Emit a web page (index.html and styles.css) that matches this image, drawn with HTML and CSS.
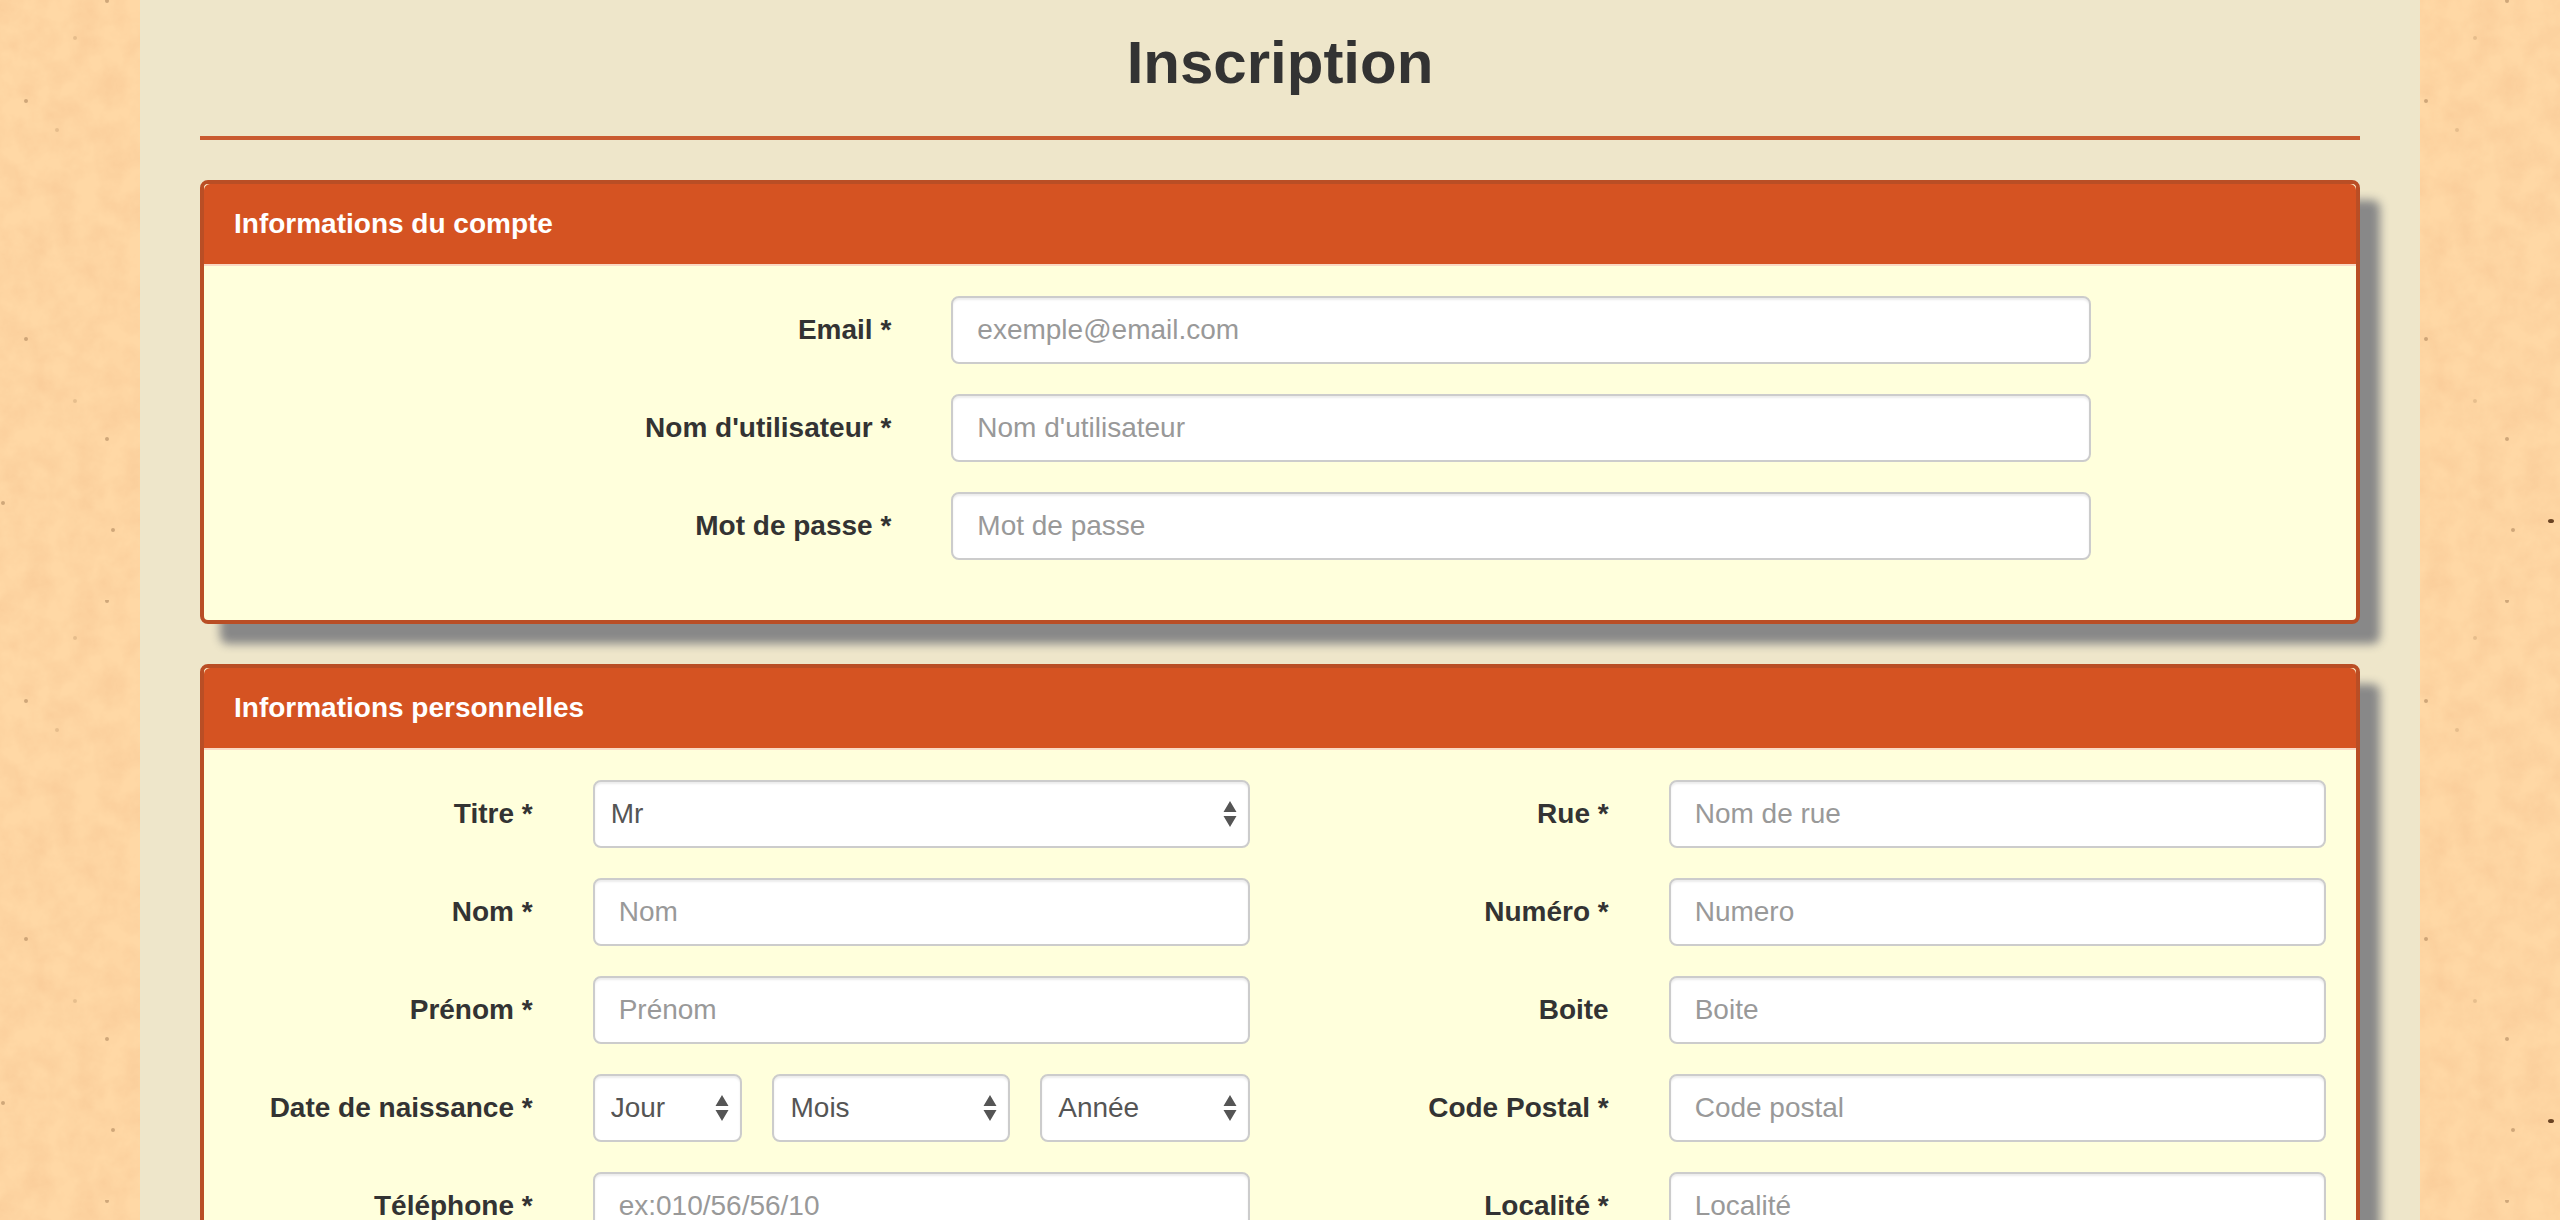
FILE: index.html
```html
<!DOCTYPE html>
<html lang="fr">
<head>
  <meta charset="utf-8">
  <meta name="viewport" content="width=device-width, initial-scale=1">
  <title>Inscription</title>
  <link rel="stylesheet" href="styles.css">
</head>
<body>
  <main class="container">
    <h1 class="page-title">Inscription</h1>
    <form class="signup">
      <section class="panel">
        <h2 class="panel-heading">Informations du compte</h2>
        <div class="panel-body account">
          <div class="field">
            <label for="email">Email *</label>
            <input class="control" type="email" id="email" placeholder="exemple@email.com">
          </div>
          <div class="field">
            <label for="username">Nom d'utilisateur *</label>
            <input class="control" type="text" id="username" placeholder="Nom d'utilisateur">
          </div>
          <div class="field">
            <label for="password">Mot de passe *</label>
            <input class="control" type="password" id="password" placeholder="Mot de passe">
          </div>
        </div>
      </section>

      <section class="panel">
        <h2 class="panel-heading">Informations personnelles</h2>
        <div class="panel-body personal">
          <div class="column">
            <div class="field">
              <label for="titre">Titre *</label>
              <select class="control" id="titre"><option>Mr</option><option>Mme</option></select>
            </div>
            <div class="field">
              <label for="nom">Nom *</label>
              <input class="control" type="text" id="nom" placeholder="Nom">
            </div>
            <div class="field">
              <label for="prenom">Prénom *</label>
              <input class="control" type="text" id="prenom" placeholder="Prénom">
            </div>
            <div class="field">
              <label for="jour">Date de naissance *</label>
              <div class="date">
                <select class="control" id="jour"><option>Jour</option></select>
                <select class="control" id="mois" aria-label="Mois"><option>Mois</option></select>
                <select class="control" id="annee" aria-label="Année"><option>Année</option></select>
              </div>
            </div>
            <div class="field">
              <label for="telephone">Téléphone *</label>
              <input class="control" type="tel" id="telephone" placeholder="ex:010/56/56/10">
            </div>
          </div>
          <div class="column">
            <div class="field">
              <label for="rue">Rue *</label>
              <input class="control" type="text" id="rue" placeholder="Nom de rue">
            </div>
            <div class="field">
              <label for="numero">Numéro *</label>
              <input class="control" type="text" id="numero" placeholder="Numero">
            </div>
            <div class="field">
              <label for="boite">Boite</label>
              <input class="control" type="text" id="boite" placeholder="Boite">
            </div>
            <div class="field">
              <label for="code-postal">Code Postal *</label>
              <input class="control" type="text" id="code-postal" placeholder="Code postal">
            </div>
            <div class="field">
              <label for="localite">Localité *</label>
              <input class="control" type="text" id="localite" placeholder="Localité">
            </div>
          </div>
        </div>
      </section>
    </form>
  </main>
</body>
</html>
```
FILE: styles.css
```css
* {
  box-sizing: border-box;
}

html {
  scrollbar-width: none;
}

/* Speckled paper, repeated every 600px */
body {
  margin: 0;
  color: #333;
  font-family: "Liberation Sans", Arial, sans-serif;
  font-size: 28px;
  line-height: 40px;
  background: #fed6a3 url("data:image/svg+xml,%3Csvg xmlns='http://www.w3.org/2000/svg' width='600' height='600'%3E%3Cfilter id='a' x='0' y='0' width='100%25' height='100%25' color-interpolation-filters='sRGB'%3E%3CfeTurbulence type='fractalNoise' baseFrequency='.04' numOctaves='4' seed='4' stitchTiles='stitch'/%3E%3CfeColorMatrix values='0 0 0 0 .95 0 0 0 0 .74 0 0 0 0 .54 .6 0 0 0 -.18'/%3E%3C/filter%3E%3Crect width='600' height='600' fill='%23ffd8a5'/%3E%3Crect width='600' height='600' filter='url(%23a)'/%3E%3Cg fill='%23a07850' fill-opacity='.5'%3E%3Ccircle cx='26' cy='101' r='2'/%3E%3Ccircle cx='26' cy='339' r='2'/%3E%3Ccircle cx='107' cy='1' r='2'/%3E%3Ccircle cx='107' cy='439' r='2'/%3E%3Ccircle cx='113' cy='530' r='2'/%3E%3Ccircle cx='3' cy='503' r='2'/%3E%3C/g%3E%3Cg fill='%23a07850' fill-opacity='.25'%3E%3Ccircle cx='75' cy='38' r='2'/%3E%3Ccircle cx='75' cy='401' r='2'/%3E%3Ccircle cx='57' cy='130' r='2'/%3E%3C/g%3E%3Cellipse cx='151' cy='521' rx='3' ry='2' fill='%236b4423'/%3E%3C/svg%3E");
}

.container {
  width: 100%;
  max-width: 2280px;
  min-height: 100vh;
  margin: 0 auto;
  padding: 30px 60px 60px;
  background: #eee6ca;
}

.page-title {
  margin: 0 0 40px;
  padding-bottom: 40px;
  border-bottom: 4px solid #c95a30;
  font-size: 60px;
  line-height: 66px;
  text-align: center;
}

.signup {
  display: flex;
  flex-direction: column;
  gap: 40px;
}

.panel {
  border: 4px solid #b94e25;
  border-radius: 8px;
  background: #ffffdc;
  box-shadow: 20px 20px 10px #888;
}

.panel-heading {
  margin: 0;
  padding: 20px 30px;
  border-bottom: 2px solid #fad9c4;
  border-radius: 6px 6px 0 0;
  background: #d55322;
  background-clip: padding-box;
  color: #fff;
  font-size: 28px;
  line-height: 40px;
}

.panel-body {
  padding: 30px 0;
}

.personal {
  display: grid;
  grid-template-columns: 1fr 1fr;
}

.field {
  display: grid;
  grid-template-columns: 1fr 2fr;
  align-items: center;
  margin-bottom: 30px;
}

.field > * {
  margin: 0 30px;
}

label {
  font-weight: bold;
  text-align: right;
}

.account .control {
  max-width: 1140px;
}

.control {
  min-width: 0;
  height: 68px;
  padding: 12px 24px;
  border: 2px solid #ccc;
  border-radius: 8px;
  background-color: #fff;
  box-shadow: inset 0 2px 2px rgba(0, 0, 0, 0.075);
  color: #555;
  font: inherit;
}

.control::placeholder {
  color: #999;
  opacity: 1;
}

select.control {
  appearance: none;
  padding: 12px 40px 12px 16px;
  background-image: url("data:image/svg+xml,%3Csvg xmlns='http://www.w3.org/2000/svg' width='14' height='26' viewBox='0 0 14 26'%3E%3Cpath d='M7 0 13.500 11H.5ZM7 26 .5 15H13.500Z' fill='%23555'/%3E%3C/svg%3E");
  background-position: right 11px center;
  background-repeat: no-repeat;
}

.date {
  display: grid;
  grid-template-columns: 150fr 238fr 210fr;
  gap: 30px;
}
```
